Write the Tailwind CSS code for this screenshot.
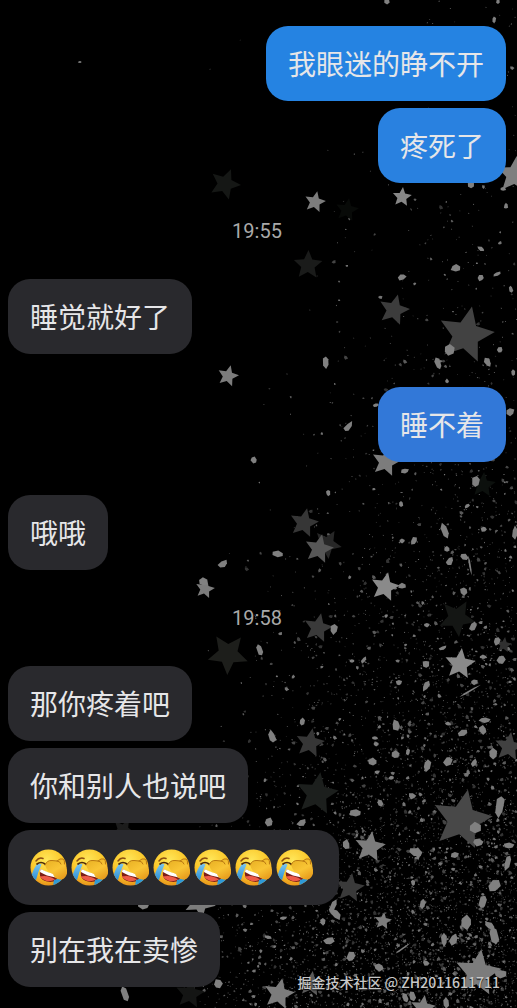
<!DOCTYPE html>
<html lang="zh-CN">
<head>
    <meta charset="UTF-8">
    <meta name="viewport" content="width=device-width, initial-scale=1.0">
    <title>聊天</title>
    <script src="https://cdn.jsdelivr.net/npm/@tailwindcss/browser@4"></script>
</head>
<body class="bg-black">
    <!-- Shared shapes -->
    <svg class="absolute size-0" aria-hidden="true">
        <defs>
            <radialGradient id="face" cx="45%" cy="30%" r="70%">
                <stop offset="0" stop-color="#ffe75a"/>
                <stop offset="0.6" stop-color="#fbc92c"/>
                <stop offset="1" stop-color="#e8951a"/>
            </radialGradient>
            <linearGradient id="palm" x1="0" y1="0" x2="0.6" y2="1">
                <stop offset="0" stop-color="#e6ae22"/>
                <stop offset="0.6" stop-color="#f9c535"/>
                <stop offset="1" stop-color="#e9a01f"/>
            </linearGradient>
            <linearGradient id="tear" x1="0" y1="0" x2="0" y2="1">
                <stop offset="0" stop-color="#7cc6ee"/>
                <stop offset="1" stop-color="#2b8fd6"/>
            </linearGradient>
            <clipPath id="head"><circle cx="18.5" cy="18.5" r="18"/></clipPath>
        </defs>
        <symbol id="laugh" viewBox="0 0 37 37">
            <circle cx="18.5" cy="18.5" r="18" fill="url(#face)"/>
            <g clip-path="url(#head)">
                <path d="M10.500 20 Q18 25 28 25.500 Q28 33 20 33 Q7 32 10.500 20Z" fill="#7d1f18"/>
                <path d="M10.500 20 Q18 24 28 25.500 L26 28.500 Q16 27 10 23Z" fill="#fff"/>
                <path d="M9.500 27.500 Q18 25.500 25 30.500 Q17 35 9.500 27.500Z" fill="#ee5a48"/>
                <path d="M7 15 Q9 14 11.500 15.500 Q8.500 22 6 31 L1 30 Q2 22 7 15Z" fill="url(#tear)"/>
                <path d="M24 31 L31 29 L32 34 L23 37Z" fill="#2e9ad8"/>
            </g>
            <path d="M6 12 Q9 8 13 9.500" fill="none" stroke="#8a4d12" stroke-width="1.500" stroke-linecap="round"/>
            <path d="M7 15 Q11 12 15 15" fill="none" stroke="#4b2a0a" stroke-width="1.700" stroke-linecap="round"/>
            <path d="M15 16 Q17 11 22 11.500 L27 12 Q30 9 33 10 Q35 11 34.500 15 Q39 22 36 27 Q33 32 28 30 Q24 29 23 25 Q17 23 15 16Z" fill="url(#palm)"/>
            <path d="M15 16 Q17 11 22 11.500 L27 12 Q30 9 33 10 Q35 11 34.500 15 M27 12 Q30 12 31 15" fill="none" stroke="#b97812" stroke-width="1" stroke-linecap="round"/>
        </symbol>
    </svg>

    <div class="relative min-h-screen overflow-hidden bg-black font-['Roboto','Noto_Sans_CJK_SC',sans-serif]">
        <svg id="sky" class="absolute inset-0 w-full h-full" viewBox="0 0 517 1008" preserveAspectRatio="xMaxYMin slice" aria-hidden="true"></svg>

        <main class="relative flex flex-col gap-[33px] pt-[26px] pb-[21px] pl-2 pr-[11px] text-[28px] leading-[35px] text-[#e6e6e8]">
            <section class="flex flex-col items-end gap-[7px]">
                <p class="rounded-[22px] bg-[#2583e2] px-[22px] pt-[22px] pb-[18px]">我眼迷的睁不开</p>
                <p class="rounded-[22px] bg-[#2981e0] px-[22px] pt-[22px] pb-[18px]">疼死了</p>
            </section>

            <time class="self-center text-center text-[20px] leading-[30px] text-[#a9a9a9]">19:55</time>

            <section class="flex flex-col items-start">
                <p class="rounded-[22px] bg-[#29292d] px-[22px] pt-[22px] pb-[18px]">睡觉就好了</p>
            </section>

            <section class="flex flex-col items-end">
                <p class="rounded-[22px] bg-[#3278d8] px-[22px] pt-[22px] pb-[18px]">睡不着</p>
            </section>

            <section class="flex flex-col items-start">
                <p class="rounded-[22px] bg-[#29292d] px-[22px] pt-[22px] pb-[18px]">哦哦</p>
            </section>

            <time class="self-center text-center text-[20px] leading-[30px] text-[#a9a9a9]">19:58</time>

            <section class="flex flex-col items-start gap-[7px]">
                <p class="rounded-[22px] bg-[#29292d] px-[22px] pt-[22px] pb-[18px]">那你疼着吧</p>
                <p class="rounded-[22px] bg-[#29292d] px-[22px] pt-[22px] pb-[18px]">你和别人也说吧</p>
                <div class="flex h-[75px] items-center gap-1 rounded-[22px] bg-[#29292d] pl-[22px] pr-[26px]">
                    <svg class="size-[37px]"><use href="#laugh"/></svg>
                    <svg class="size-[37px]"><use href="#laugh"/></svg>
                    <svg class="size-[37px]"><use href="#laugh"/></svg>
                    <svg class="size-[37px]"><use href="#laugh"/></svg>
                    <svg class="size-[37px]"><use href="#laugh"/></svg>
                    <svg class="size-[37px]"><use href="#laugh"/></svg>
                    <svg class="size-[37px]"><use href="#laugh"/></svg>
                </div>
                <p class="rounded-[22px] bg-[#29292d] px-[22px] pt-[22px] pb-[18px]">别在我在卖惨</p>
            </section>
        </main>

        <p class="absolute right-[17px] bottom-4 text-[14px] leading-5 font-medium text-[#c8c8c8] font-['Noto_Sans_CJK_SC',sans-serif] text-shadow-[0_1px_1px_#000]">掘金技术社区 @ ZH2011611711</p>
    </div>

    <script>
        const NS = 'http://www.w3.org/2000/svg';
        const sky = document.getElementById('sky');

        function add(d, fill) {
            const path = document.createElementNS(NS, 'path');
            path.setAttribute('d', d);
            path.setAttribute('fill', fill);
            sky.appendChild(path);
        }

        // Closed shape around a centre; radii repeat, one per corner
        function ring(x, y, radii, count, turn) {
            let d = '';
            for (let i = 0; i < count; i++) {
                const a = (turn + i * 360 / count - 90) * Math.PI / 180;
                const r = radii[i % radii.length];
                d += (i ? 'L' : 'M') + (x + r * Math.cos(a)).toFixed(1) + ' ' + (y + r * Math.sin(a)).toFixed(1);
            }
            return d + 'Z';
        }

        // Small seeded generator so the dust is the same on every load
        let seed = 20116;
        function rnd() {
            seed = (seed * 1664525 + 1013904223) % 4294967296;
            return seed / 4294967296;
        }

        // x, y, radius, turn, colour
        const stars = [
            [225, 184, 16, 22, '#151715'], [315, 202, 11, 12, '#7c7c7c'], [402, 197, 10, 6, '#868686'],
            [515, 175, 19, 5, '#7f7f7f'], [347, 210, 12, 10, '#080a08'], [308, 265, 15, 2, '#1a1b1a'],
            [228, 376, 11, 14, '#7c7c7c'], [394, 310, 16, 14, '#3c3c3c'], [466, 335, 29, 12, '#424242'],
            [386, 462, 15, 12, '#7c7c7c'], [483, 485, 13, 5, '#0c100d'], [304, 523, 15, 12, '#363636'],
            [327, 544, 15, 30, '#272727'], [319, 549, 15, 12, '#575757'], [385, 587, 15, 12, '#8a8a8a'],
            [205, 589, 10, 12, '#7c7c7c'], [318, 628, 15, 12, '#3a3a3a'], [457, 618, 19, 30, '#141614'],
            [228, 654, 21, 38, '#1d1e1b'], [460, 664, 16, 7, '#8a8a8a'], [310, 743, 15, 10, '#363636'],
            [509, 747, 15, 8, '#414141'], [504, 645, 8, 8, '#303030'], [317, 794, 22, 9, '#1c1f1d'],
            [462, 820, 31, 11, '#484848'], [370, 847, 16, 8, '#7c7c7c'], [350, 888, 15, 8, '#3a3a3a'],
            [200, 903, 16, 28, '#7c7c7c'], [383, 921, 9, 8, '#7c7c7c'], [478, 973, 24, 8, '#7c7c7c'],
            [279, 994, 16, 12, '#7c7c7c'], [311, 984, 13, 8, '#5a5a5a'], [423, 1008, 13, 8, '#7c7c7c'],
            [190, 994, 15, 8, '#141514'], [123, 830, 12, 30, '#1c1c1c']
        ];

        // x, y, half width, half height, turn
        const chips = [
            [387, 1, 3, 3, 0], [498, 1, 2, 3, 0], [494, 20, 2, 3, 0], [80, 62, 2, 1, 0], [471, 185, 3, 3, 0],
            [506, 206, 2, 3, 0], [503, 189, 3, 2, 0], [481, 249, 4, 2, 20], [456, 268, 5, 4, 5], [402, 277, 4, 3, -30],
            [481, 278, 3, 3, 30], [497, 274, 4, 2, -20], [511, 289, 2, 4, -10], [449, 350, 5, 5, 10], [326, 362, 3, 6, 0],
            [438, 364, 3, 7, -20], [488, 363, 3, 5, -30], [500, 350, 3, 3, 30], [447, 381, 2, 2, 0], [513, 373, 2, 3, 0],
            [348, 427, 3, 6, 35], [376, 405, 3, 2, -20], [510, 412, 4, 4, 0], [405, 471, 4, 3, 0], [476, 482, 4, 6, 10],
            [328, 493, 2, 3, 0], [401, 504, 2, 3, 0], [467, 506, 3, 2, -30], [254, 460, 3, 4, -40], [278, 554, 6, 3, 8],
            [445, 531, 3, 7, -20], [484, 529, 3, 3, 40], [515, 533, 3, 6, 0], [402, 541, 3, 2, 0], [414, 541, 3, 4, 40],
            [447, 549, 3, 3, 0], [450, 561, 3, 5, 30], [464, 557, 5, 3, 30], [470, 566, 1, 9, -10], [402, 586, 4, 3, 0],
            [464, 591, 4, 4, 0], [223, 564, 5, 3, -30], [203, 582, 4, 4, 0], [334, 629, 4, 5, 8], [260, 650, 3, 7, -20],
            [386, 616, 2, 2, 0], [427, 625, 3, 2, 0], [473, 627, 3, 5, 20], [497, 641, 3, 4, 20], [443, 648, 4, 2, -20],
            [483, 657, 4, 2, 0], [501, 660, 4, 5, 30], [426, 664, 3, 4, 0], [352, 661, 3, 2, 0], [364, 660, 2, 4, 30],
            [399, 683, 3, 3, 0], [426, 686, 3, 5, 30], [474, 682, 4, 3, 0], [470, 691, 1, 11, 60], [302, 722, 3, 4, 10],
            [272, 737, 4, 7, -10], [396, 725, 4, 5, -20], [375, 738, 3, 2, 0], [376, 744, 3, 2, 0], [485, 720, 6, 3, 10],
            [483, 730, 4, 4, 0], [463, 733, 5, 3, -20], [448, 724, 3, 2, 0], [408, 752, 2, 3, 0], [493, 754, 4, 5, 0],
            [373, 762, 5, 4, 0], [377, 772, 3, 2, 0], [395, 755, 4, 4, 10], [391, 778, 3, 2, 0], [427, 765, 4, 6, 10],
            [448, 761, 4, 5, 20], [474, 763, 3, 4, 20], [412, 796, 4, 3, 20], [380, 803, 3, 4, -20], [356, 813, 6, 4, 5],
            [269, 822, 4, 4, 20], [302, 823, 5, 3, -30], [346, 845, 4, 5, 10], [415, 852, 7, 4, 20], [418, 853, 3, 6, 0],
            [500, 806, 4, 12, 8], [475, 828, 6, 5, 0], [478, 842, 6, 4, 20], [455, 855, 4, 3, 0], [509, 846, 5, 3, 5],
            [508, 862, 3, 8, 20], [494, 886, 6, 8, 40], [483, 902, 4, 8, 20], [423, 904, 3, 5, 10], [413, 883, 2, 3, 0],
            [333, 907, 3, 8, 25], [336, 914, 4, 6, -30], [323, 922, 3, 4, 0], [283, 918, 4, 2, 0], [268, 937, 4, 2, 10],
            [329, 941, 5, 4, -20], [351, 957, 4, 6, 30], [379, 967, 5, 4, 0], [426, 963, 4, 3, 30], [444, 940, 3, 6, 0],
            [454, 939, 4, 6, 20], [467, 922, 6, 7, 0], [494, 936, 4, 9, -15], [490, 926, 6, 3, 30], [402, 949, 1, 10, 55],
            [446, 1003, 3, 5, 0], [412, 996, 3, 5, -20], [125, 994, 3, 8, -20], [143, 906, 6, 3, 10], [218, 984, 4, 5, 30],
            [500, 974, 6, 4, 0], [405, 998, 3, 5, -25]
        ];

        // Dust gets thicker towards the lower right corner
        const shades = ['#333333', '#444444', '#5a5a5a', '#747474'];
        const dust = ['', '', '', ''];
        for (let i = 0; i < 36000; i++) {
            const x = 180 + rnd() * 337;
            const y = rnd() * 1008;
            const edge = 400 - y * 0.2;
            const side = Math.max(0, Math.min(1, (x - edge + 80) / 250));
            const depth = 0.04 + Math.pow(y / 1008, 2.5) * 0.85;
            const keep = Math.pow(side, 1.6) * depth + (x > 300 ? 0.002 : 0.0005);
            const pick = rnd();
            const size = rnd();
            const shade = Math.floor(rnd() * 4);
            if (pick > keep) continue;
            const r = 0.6 + Math.pow(size, 6) * 1.8;
            dust[shade] += ring(x, y, [r, r * 0.7, r * 1.2], 5, size * 3600);
        }
        dust.forEach((d, i) => add(d, shades[i]));

        stars.forEach(s => add(ring(s[0], s[1], [s[2], s[2] * 0.47], 10, s[3]), s[4]));

        chips.forEach(c => {
            const a = c[4] * Math.PI / 180;
            const pts = [];
            for (let i = 0; i < 6; i++) {
                const t = i * Math.PI / 3 + 0.5;
                const k = 0.75 + rnd() * 0.5;
                const px = c[2] * k * Math.cos(t);
                const py = c[3] * k * Math.sin(t);
                pts.push((c[0] + px * Math.cos(a) - py * Math.sin(a)).toFixed(1) + ' ' + (c[1] + px * Math.sin(a) + py * Math.cos(a)).toFixed(1));
            }
            add('M' + pts.join('L') + 'Z', '#808080');
        });
    </script>
</body>
</html>
